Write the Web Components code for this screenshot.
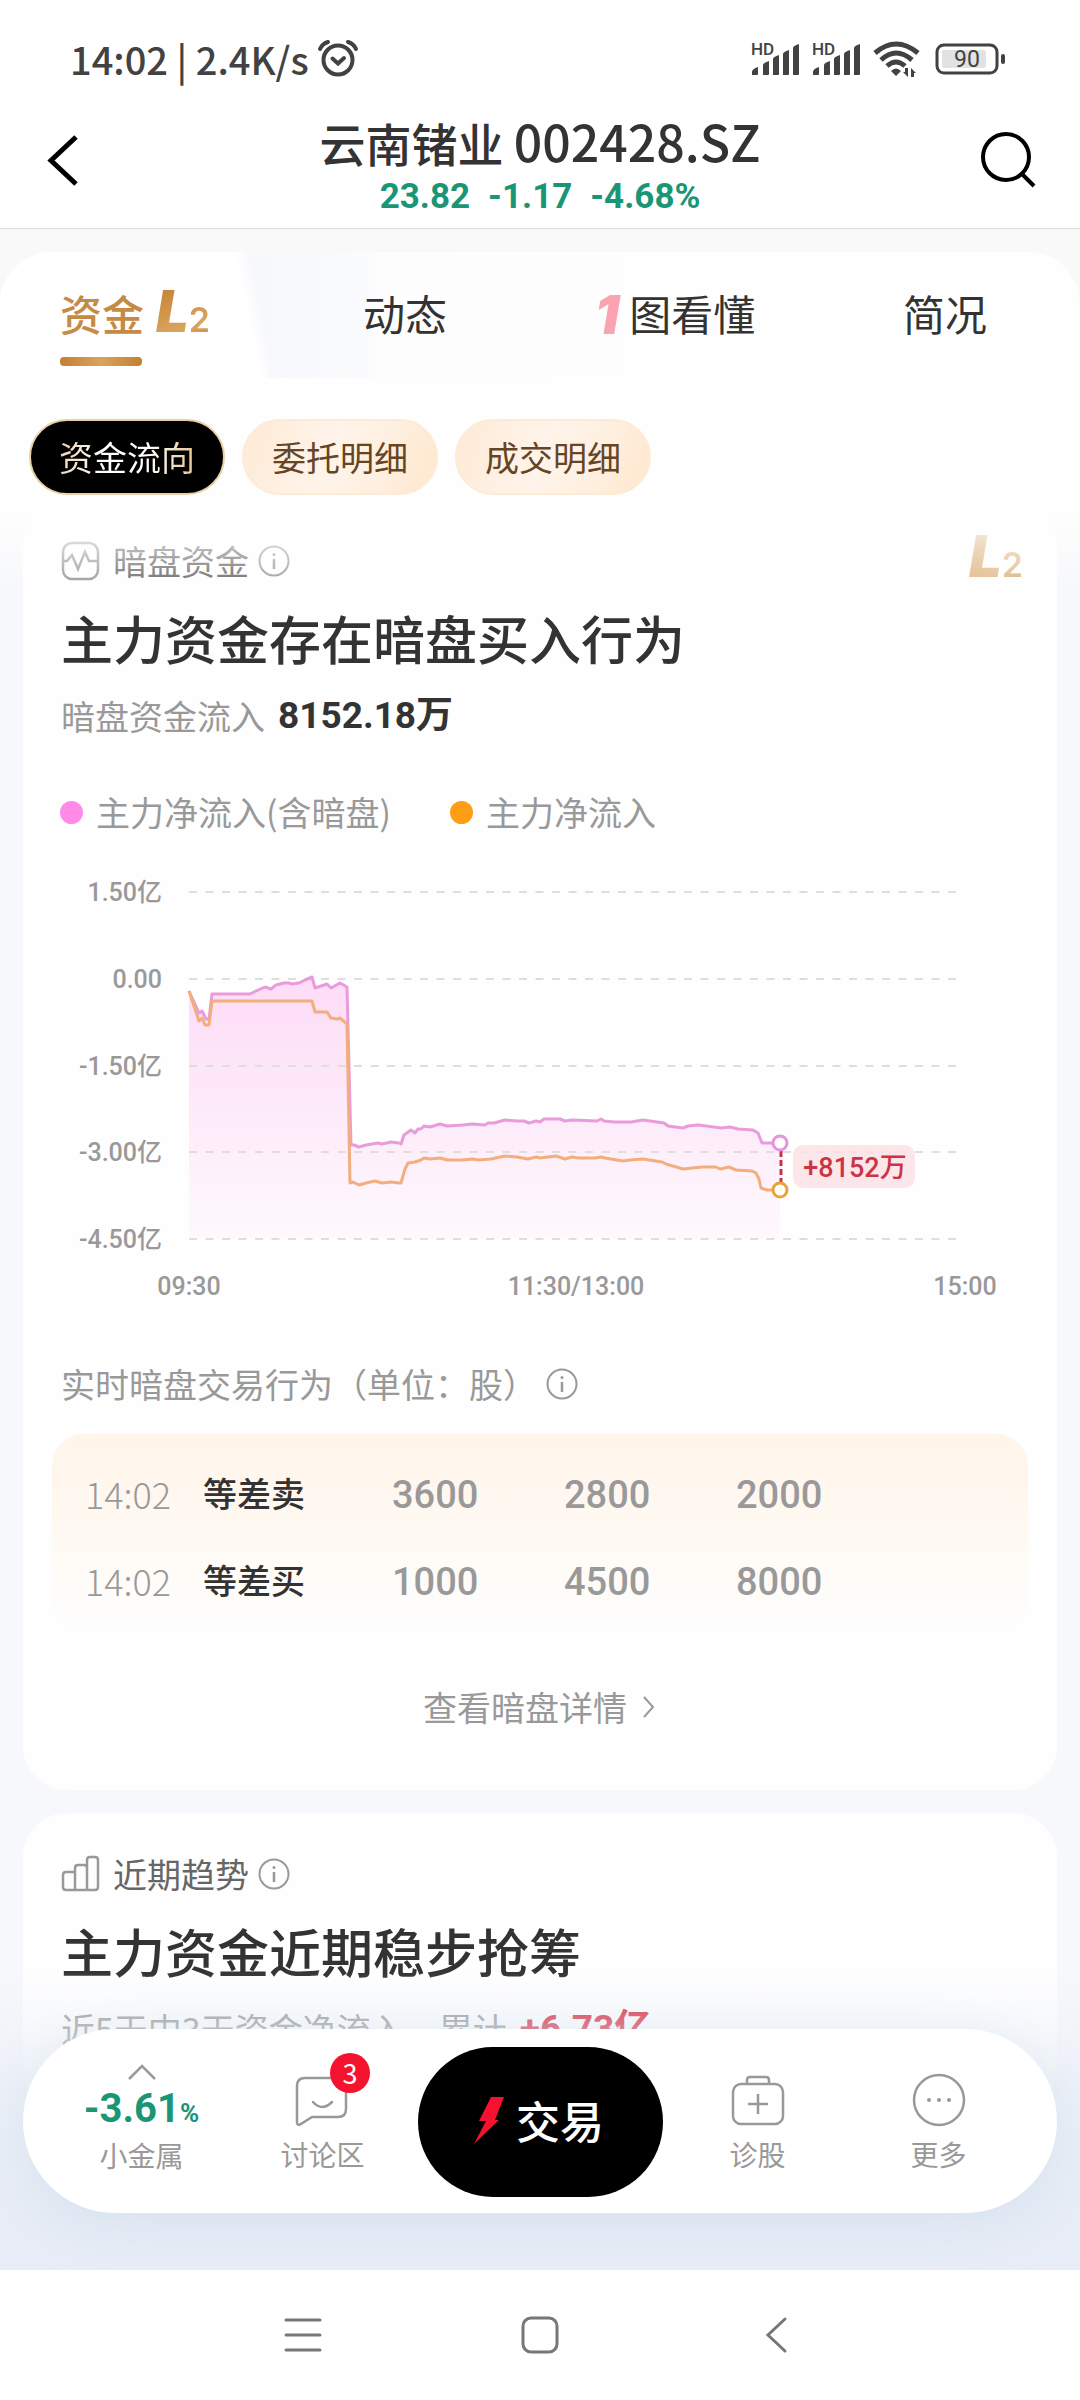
<!DOCTYPE html>
<html lang="zh-CN">
<head>
<meta charset="utf-8">
<meta name="viewport" content="width=device-width, initial-scale=1">
<title>云南锗业 002428.SZ</title>
<style>
html, body{
    margin: 0;
    height: 100%;
}
body{
    font-family: "Noto Sans CJK SC", "Noto Sans", sans-serif;
    color: #333;
    background: #fff;
    --num: Roboto, "Noto Sans CJK SC", sans-serif;
    --green: #1a9677;
    --grey: #999;
    --red: #f5122f;
}
</style>
</head>
<body>
<stock-app></stock-app>

<script>
// every element gets these rules first
const base = `
*{ box-sizing: border-box; }
button{ font: inherit; color: inherit; background: none; border: 0; margin: 0; padding: 0; cursor: pointer; }
svg{ display: block; }
`;

function define(tag, html, setup){
    const template = document.createElement('template');
    template.innerHTML = html.replace('<style>', '<style>' + base);
    customElements.define(tag, class extends HTMLElement{
        constructor(){
            super();
            this.attachShadow({mode:'open'});
            this.shadowRoot.appendChild(template.content.cloneNode(true));
        }
        connectedCallback(){
            if(setup) setup(this, this.shadowRoot);
        }
    });
}

const signal = `
<svg width="52" height="44" viewBox="0 -4 52 44">
    <text x="1" y="14" font-size="17" font-weight="500">HD</text>
    <path d="M2 34v-3q0-3 6-5v7q0 1-1 1zM13 34V24q0-2 6-4v13q0 1-1 1zM23 34V18q0-2 6-4v19q0 1-1 1zM33 34V13q0-2 6-4v24q0 1-1 1zM43 34V7q0-2 6-4v30q0 1-1 1z"/>
</svg>`;

// ---- phone status bar ----
define('status-bar', `
<style>
:host{ display: flex; align-items: center; justify-content: space-between; height: 112px; padding: 34px 73px 28px 70px; color: #424242; }
.left{ display: flex; align-items: center; gap: 8px; font-size: 38px; line-height: 48px; font-weight: 500; }
.right{ display: flex; align-items: center; gap: 9px; font-family: Roboto, sans-serif; }
svg{ fill: currentColor; }
svg.line{ fill: none; stroke: currentColor; }
.battery{ margin-left: 4px; }
</style>
<div class="left"><span>14:02 | 2.4K/s</span>
    <svg class="line" width="42" height="40" viewBox="0 0 42 40" stroke-width="4" stroke-linecap="round">
        <circle cx="21" cy="21" r="14.5"/><path d="M3 10q2-5 8-7M39 10q-2-5-8-7M15.500 19.500l5.500 5 6-5.500"/>
    </svg>
</div>
<div class="right">
    ${signal}${signal}
    <svg width="50" height="36" viewBox="0 0 50 36">
        <g fill="none" stroke="currentColor" stroke-width="5"><path d="M3 12Q24-6 46 12M9 19Q24 5 40 19M15 25q9-8 18 0"/></g>
        <path d="M19 30q5-5 10 0l-5 5zM36 27v9l-5-5h2v-4zM39 36v-9l5 5h-2v4z"/>
    </svg>
    <svg class="battery" width="72" height="32" viewBox="0 0 72 32">
        <rect x="2" y="2" width="60" height="28" rx="7" fill="none" stroke="currentColor" stroke-width="3"/>
        <rect x="7" y="7" width="44" height="18" rx="2" fill="#e2e2e2"/>
        <rect x="66" y="11" width="4" height="10" rx="2"/>
        <text x="32" y="24" font-size="23" text-anchor="middle">90</text>
    </svg>
</div>
`);

// ---- title + price ----
define('stock-header', `
<style>
:host{ display: flex; justify-content: space-between; height: 117px; padding: 0 30px; border-bottom: 1px solid #dcdcdc; }
button{ width: 80px; height: 96px; display: flex; align-items: center; justify-content: center; }
svg{ fill: none; stroke: #000; }
.mid{ text-align: center; }
h1{ margin: 0; font-size: 46px; line-height: 56px; font-weight: 500; }
h1 span{ font-size: 50px; }
.price{ display: flex; justify-content: center; gap: 18px; padding-top: 7px; font: 700 35px/40px var(--num); color: var(--green); }
</style>
<button aria-label="返回"><svg width="64" height="52" viewBox="0 0 64 52" stroke-width="5"><path d="M38 3L13 26.500 38 50"/></svg></button>
<div class="mid">
    <h1>云南锗业 <span>002428.SZ</span></h1>
    <div class="price"><span>23.82</span><span>-1.17</span><span>-4.68%</span></div>
</div>
<button aria-label="搜索"><svg width="60" height="60" viewBox="0 0 60 60" stroke-width="4"><circle cx="26" cy="27" r="23"/><path d="M41 43l13 13"/></svg></button>
`);

// ---- level 2 mark ----
define('level-mark', `
<style>
:host{ display: inline-flex; align-items: baseline; padding: 4px 0 0 2px; line-height: 44px; font-family: Inter, Roboto, sans-serif; color: transparent; background: linear-gradient(160deg, #c47f30, #d9a45f 70%, #c48a45); -webkit-background-clip: text; background-clip: text; }
b{ font-size: 58px; font-weight: 900; font-style: italic; }
span{ font-size: 34px; font-weight: 600; }
</style>
<b>L</b><span>2</span>
`);

define('tab-bar', `
<style>
:host{ display: grid; grid-template-columns: repeat(4, 1fr); height: 126px; border-radius: 52px 52px 0 0; overflow: hidden; background: linear-gradient(90deg, #fff 22%, #f7f8fc 24%, #fafbfd 34%, #fdfdfe 35%, #fefefe 60%); }
</style>
<slot></slot>
`);

define('tab-item', `
<style>
:host{ display: block; }
:host([active]){ background: linear-gradient(78deg, #fff 88%, #f7f8fc 93%); }
button{ width: 100%; height: 126px; display: flex; flex-direction: column; align-items: center; padding-top: 32px; font-size: 42px; line-height: 58px; color: #333; }
.row{ display: flex; align-items: center; gap: 10px; position: relative; }
:host([active]) .row{ color: #c58b45; font-weight: 500; }
:host([active]) .row::after{ content: ""; position: absolute; left: 0; top: 73px; width: 82px; height: 9px; border-radius: 4px; background: linear-gradient(90deg, #c47f30, #d9a45f, #c47f30); }
</style>
<button role="tab"><span class="row"><slot></slot></span></button>
`);

define('chip-button', `
<style>
:host{ display: block; }
button{ height: 76px; padding: 0 28px; border: 2px solid #fdebd6; border-radius: 38px; font-size: 34px; line-height: 48px; color: #664525; background: linear-gradient(110deg, #feead6, #fff4ea 45%, #fef0e0 70%, #fee7cd); }
:host([active]) button{ color: #fff; border-color: #e8cfa4; background: #000; }
:host([active]) span{ color: transparent; background: linear-gradient(90deg, #ecd6b4, #fff 35%, #fff 65%, #e8c590); -webkit-background-clip: text; background-clip: text; }
</style>
<button><span><slot></slot></span></button>
`);

define('info-dot', `
<style>
:host{ display: inline-flex; }
svg{ fill: none; stroke: var(--grey); }
</style>
<button aria-label="说明"><svg width="34" height="34" viewBox="0 0 34 34" stroke-width="2"><circle cx="17" cy="17" r="14.500"/><path d="M17 15v10" stroke-width="2.500"/><circle cx="17" cy="10.500" r="1.500" fill="#999" stroke="none"/></svg></button>
`);

// ---- white card with label, heading and sub line ----
define('fund-card', `
<style>
:host{ display: block; position: relative; padding: 41px 0 59px; border-radius: 44px; background: #fefefe; overflow: hidden; }
.label{ display: flex; align-items: center; height: 40px; padding: 0 38px; font-size: 34px; line-height: 40px; color: #666; }
.label slot[name=icon]{ display: block; width: 40px; }
.label .name{ margin: 0 8px 0 12px; }
h2{ margin: 27px 38px 24px; font-size: 52px; line-height: 60px; font-weight: 500; }
.sub{ display: flex; align-items: center; gap: 13px; margin: 0 38px; font-size: 34px; line-height: 48px; color: var(--grey); white-space: pre; }
::slotted([slot=badge]){ position: absolute; right: 34px; top: 30px; opacity: .75; }
</style>
<div class="label"><slot name="icon"></slot><span class="name"><slot name="label"></slot></span><info-dot></info-dot></div>
<slot name="badge"></slot>
<h2><slot name="title"></slot></h2>
<div class="sub"><slot name="sub"></slot></div>
<slot></slot>
`);

define('chart-legend', `
<style>
:host{ display: flex; gap: 59px; padding: 48px 37px 14px; font-size: 34px; line-height: 48px; color: var(--grey); }
span{ display: flex; align-items: center; gap: 13px; }
i{ width: 23px; height: 23px; border-radius: 12px; background: #ff8be6; }
i.main{ background: #ff9d17; }
</style>
<span><i></i>主力净流入(含暗盘)</span>
<span><i class="main"></i>主力净流入</span>
`);

// points are x,y inside the plot, 0,0 = 09:30 at 1.50亿
const dark = '0,99 10,121 13,119 17,127 20,127 23,102 61,102 65,100 76,95 82,97 87,93 95,91 100,91 103,92 110,91 116,88 123,85 126,96 138,92 142,96 151,91 158,95 162,253 165,253 170,255 177,253 183,252 189,251 193,252 202,250 210,251 212,252 215,243 222,238 226,241 229,237 232,237 235,234 241,235 251,232 258,234 274,233 283,232 296,233 299,231 305,231 316,228 328,229 335,229 340,231 347,229 351,230 355,227 371,227 376,229 383,228 408,229 412,227 415,229 425,230 442,230 454,228 475,231 479,234 494,236 499,234 509,233 525,235 532,236 541,235 549,237 564,238 569,241 573,251 591,251';
const main = '0,99 10,129 13,126 16,133 20,133 23,109 123,109 126,120 138,120 142,126 148,127 151,126 158,132 161,291 164,290 170,293 177,291 186,289 193,291 202,290 210,291 212,291 216,277 219,271 226,270 232,268 235,266 241,267 251,266 258,268 274,268 283,267 290,268 302,267 316,264 328,265 339,267 347,265 351,266 367,264 373,266 376,267 383,265 389,266 406,266 412,265 416,266 434,269 441,268 454,267 473,270 477,272 494,277 513,275 527,275 531,277 540,275 547,278 563,279 567,281 570,287 572,296 578,298 591,298';

define('flow-chart', `
<style>
:host{ display: block; }
svg{ width: 100%; height: auto; font: 500 25px var(--num); fill: var(--grey); }
.grid{ stroke: #dedede; stroke-width: 2; stroke-dasharray: 8 8.5; }
polyline{ fill: none; stroke-width: 3; stroke-linejoin: round; }
</style>
<svg viewBox="0 0 1034 470" role="img" aria-label="主力净流入走势">
    <defs><linearGradient id="fade" gradientUnits="userSpaceOnUse" x1="0" y1="85" x2="0" y2="347">
        <stop offset="0" stop-color="#fddcf7"/><stop offset=".6" stop-color="#fdedfa"/><stop offset="1" stop-color="#fef9fe"/>
    </linearGradient></defs>
    <g transform="translate(166 42)">
        <polygon fill="url(#fade)" points="0,347 ${dark} 591,347"/>
        <g id="axis"></g>
        <polyline stroke="#ea9bdb" points="${dark}"/>
        <polyline stroke="#f2ae7c" points="${main}"/>
        <path d="M592 259v32" stroke="#c63444" stroke-width="3" stroke-dasharray="6 3"/>
        <circle cx="591" cy="251" r="7" fill="#fff" stroke="#e594d9" stroke-width="3"/>
        <circle cx="591" cy="298" r="7" fill="#fff" stroke="#e8a23c" stroke-width="3"/>
        <rect x="604" y="253" width="122" height="43" rx="10" fill="#fbe2e5" fill-opacity=".85"/>
        <text x="666" y="285" font-size="27" text-anchor="middle" fill="#cb3444">+8152万</text>
        <text x="0" y="403" text-anchor="middle">09:30</text>
        <text x="387" y="403" text-anchor="middle">11:30/13:00</text>
        <text x="776" y="403" text-anchor="middle">15:00</text>
    </g>
</svg>
`, (el, root) => {
    const axis = root.getElementById('axis');
    axis.innerHTML = ['1.50亿', '0.00', '-1.50亿', '-3.00亿', '-4.50亿'].map((t, i) => {
        const y = Math.round(i * 86.75);
        return `<path class="grid" d="M0 ${y}h768"/><text x="-27" y="${y + 9}" text-anchor="end">${t}</text>`;
    }).join('');
});

define('trade-table', `
<style>
:host{ display: block; padding: 0 29px; }
h3{ display: flex; align-items: center; gap: 8px; margin: 40px 9px 26px; font-size: 34px; line-height: 48px; font-weight: 400; color: var(--grey); }
.box{ padding: 17px 0 10px; border-radius: 32px; background: linear-gradient(#fff5ea, #fff9f2 45%, #fefefe); }
table{ width: 100%; border-collapse: collapse; table-layout: fixed; }
tr{ height: 87px; }
td{ padding: 0 0 4px; color: var(--grey); font-size: 34px; line-height: 48px; }
td:first-child{ width: 151px; padding-left: 33px; font-size: 36px; font-weight: 300; }
td.type{ width: 189px; color: #333; font-weight: 500; }
td.num{ width: 172px; padding: 0; font: 500 38px/48px var(--num); }
</style>
<h3>实时暗盘交易行为（单位：股）<info-dot></info-dot></h3>
<div class="box"><table>
    <tr><td>14:02</td><td class="type">等差卖</td><td class="num">3600</td><td class="num">2800</td><td class="num">2000</td><td></td></tr>
    <tr><td>14:02</td><td class="type">等差买</td><td class="num">1000</td><td class="num">4500</td><td class="num">8000</td><td></td></tr>
</table></div>
`);

define('more-link', `
<style>
:host{ display: flex; justify-content: center; padding-top: 48px; }
a{ display: flex; align-items: center; gap: 14px; font-size: 34px; line-height: 48px; color: var(--grey); text-decoration: none; }
svg{ fill: none; stroke: currentColor; }
</style>
<a href="#"><slot></slot><svg width="16" height="24" viewBox="0 0 16 24" stroke-width="2"><path d="M3 2l9 10-9 10"/></svg></a>
`);

// ---- floating bar at the bottom ----
define('trade-dock', `
<style>
:host{ display: block; position: absolute; left: 0; right: 0; bottom: 0; padding: 59px 23px 57px; background: linear-gradient(#e9eef700, #e9eef7cc 45%, #e8edf7 80%); }
nav{ display: grid; grid-template-columns: 1fr 1fr 254px 1fr 1fr; align-items: start; height: 184px; padding: 18px 28px; border-radius: 92px; background: #fff; box-shadow: 0 12px 50px #c9dcea99; }
nav > button{ position: relative; display: flex; flex-direction: column; align-items: center; padding-top: 22px; font-size: 28px; line-height: 40px; color: var(--grey); }
nav > button.index{ padding-top: 14px; }
svg{ fill: none; stroke: #999; stroke-width: 2.5; }
.index b{ font: 700 40px/44px var(--num); color: var(--green); }
.index small{ font-size: 26px; }
.icon{ width: 60px; height: 60px; margin-bottom: 5px; }
.badge{ position: absolute; left: 98px; top: 6px; width: 40px; height: 40px; border-radius: 20px; background: var(--red); color: #fff; font-size: 27px; line-height: 40px; }
nav > button.trade{ width: 245px; height: 150px; margin: 0 auto; padding: 0 4px 4px 0; flex-direction: row; justify-content: center; gap: 10px; border-radius: 75px; background: #000; color: #fff; font-size: 44px; font-weight: 500; }
.trade svg{ fill: var(--red); stroke: none; }
</style>
<nav>
    <button class="index">
        <svg width="32" height="26" viewBox="0 0 32 26"><path d="M3 18L16 5l13 13"/></svg>
        <b>-3.61<small>%</small></b><span>小金属</span>
    </button>
    <button>
        <svg class="icon" viewBox="0 0 60 60"><path d="M4 17q0-8 8-8h33q8 0 8 8v23q0 8-8 8H19L7 55.500q-3 1-3-2zM20 33q9 10 19 0" stroke-linecap="round"/></svg>
        <span>讨论区</span><span class="badge">3</span>
    </button>
    <button class="trade">
        <svg width="34" height="50" viewBox="0 0 34 50"><path d="M19 2h13l-9 23h4L2 49l12-23H7z"/></svg>交易
    </button>
    <button>
        <svg class="icon" viewBox="0 0 60 60"><rect x="5" y="15" width="50" height="40" rx="8"/><path d="M19 15v-4q0-3 3-3h16q3 0 3 3v4M30 25v20M20 35h20"/></svg>
        <span>诊股</span>
    </button>
    <button>
        <svg class="icon" viewBox="0 0 60 60"><circle cx="30" cy="31" r="25"/><g fill="#999" stroke="none"><circle cx="20" cy="31" r="2"/><circle cx="30" cy="31" r="2"/><circle cx="40" cy="31" r="2"/></g></svg>
        <span>更多</span>
    </button>
</nav>
`);

define('system-nav', `
<style>
:host{ display: grid; grid-template-columns: repeat(3, 237px); justify-content: center; align-items: center; height: 130px; background: #fff; }
button{ display: flex; justify-content: center; }
svg{ fill: none; stroke: #777; stroke-width: 3; stroke-linecap: round; }
</style>
<button aria-label="菜单"><svg width="44" height="44" viewBox="0 0 44 44"><path d="M5 7h34M5 22h34M5 37h34"/></svg></button>
<button aria-label="主页"><svg width="44" height="44" viewBox="0 0 44 44"><rect x="5" y="5" width="34" height="34" rx="8"/></svg></button>
<button aria-label="后退"><svg width="44" height="44" viewBox="0 0 44 44"><path d="M30 6L13 22l17 16"/></svg></button>
`);

define('stock-app', `
<style>
:host{ display: flex; flex-direction: column; height: 100%; min-height: 1400px; }
main{ position: relative; flex: 1; min-height: 0; overflow: hidden; background: #f7f8fb; }
.top{ position: relative; z-index: 1; padding-top: 23px; background: linear-gradient(#f9f9f9 90px, #fefefe 90px); }
.top::after{ content: ""; position: absolute; left: 0; right: 0; top: 100%; height: 90px; background: linear-gradient(#fefefe 15%, #fefefe00); pointer-events: none; }
.chips{ display: flex; gap: 17px; padding: 41px 29px 5px; background: #fefefe; }
.cards{ display: flex; flex-direction: column; gap: 23px; padding: 0 23px; }
.one{ padding-top: 4px; font: italic 900 54px/44px Inter, Roboto, sans-serif; color: #fba3b1; }
.total{ font: 700 37px/48px var(--num); color: #333; }
.total.up{ color: #d8283d; }
.ico{ fill: none; stroke: #999; stroke-width: 2.5; }
</style>
<status-bar></status-bar>
<stock-header></stock-header>
<main>
    <div class="top">
        <tab-bar role="tablist">
            <tab-item active>资金<level-mark></level-mark></tab-item>
            <tab-item>动态</tab-item>
            <tab-item><span class="one">1</span>图看懂</tab-item>
            <tab-item>简况</tab-item>
        </tab-bar>
        <div class="chips">
            <chip-button active>资金流向</chip-button>
            <chip-button>委托明细</chip-button>
            <chip-button>成交明细</chip-button>
        </div>
    </div>
    <div class="cards">
        <fund-card>
            <svg slot="icon" class="ico" width="40" height="40" viewBox="0 0 40 40"><rect x="2" y="2" width="35" height="36" rx="9"/><path d="M2 20h4l5-6 6 14 7-17 4 9h9"/></svg>
            <span slot="label">暗盘资金</span>
            <level-mark slot="badge"></level-mark>
            <span slot="title">主力资金存在暗盘买入行为</span>
            <span slot="sub">暗盘资金流入</span><span slot="sub" class="total">8152.18万</span>
            <chart-legend></chart-legend>
            <flow-chart></flow-chart>
            <trade-table></trade-table>
            <more-link>查看暗盘详情</more-link>
        </fund-card>
        <fund-card>
            <svg slot="icon" class="ico" width="40" height="40" viewBox="0 0 40 40"><path d="M2 21q0-3 3-3h9v18H5q-3 0-3-3zM14 36V14q0-3 3-3h6q3 0 3 3M26 36V6q0-3 3-3h5q3 0 3 3v27q0 3-3 3zM14 36h15"/></svg>
            <span slot="label">近期趋势</span>
            <span slot="title">主力资金近期稳步抢筹</span>
            <span slot="sub">近5天中3天资金净流入，累计</span><span slot="sub" class="total up">+6.73亿</span>
        </fund-card>
    </div>
    <trade-dock></trade-dock>
</main>
<system-nav></system-nav>
`);
</script>
</body>
</html>
